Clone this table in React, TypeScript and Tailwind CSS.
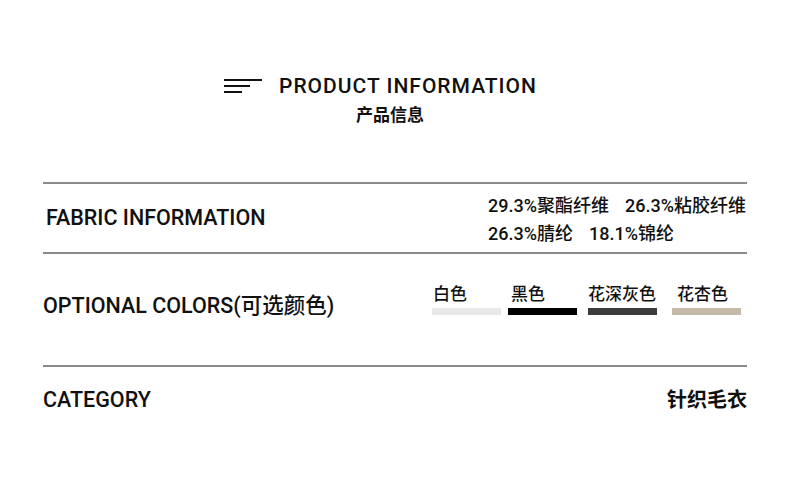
const font = { fontFamily: 'Roboto, "Noto Sans CJK SC", sans-serif' };

const colors = [
  { name: '白色', bar: 'bg-[#e8e8e8]', gap: 'mr-[7px]', pad: 'pl-[1px]' },
  { name: '黑色', bar: 'bg-[#000000]', gap: 'mr-[11px]', pad: 'pl-[3px]' },
  { name: '花深灰色', bar: 'bg-[#3b3b3d]', gap: 'mr-[15px]', pad: 'pl-0' },
  { name: '花杏色', bar: 'bg-[#c5b9a7]', gap: 'mr-0', pad: 'pl-[5px]' },
];

export default function App() {
  return (
    <main className="h-[494px] w-[790px] bg-white text-[#111]" style={font}>
      <header className="pt-[72px]">
        <div className="flex items-center pl-[224px]">
          <div className="flex w-[38px] flex-col gap-[4px]">
            <span className="h-[2px] w-[38px] bg-[#111]" />
            <span className="h-[2px] w-[26px] bg-[#111]" />
            <span className="h-[2px] w-[18px] bg-[#111]" />
          </div>
          <h1 className="ml-[17px] text-[21px] leading-[28px] font-medium tracking-[1px]">PRODUCT INFORMATION</h1>
        </div>
        <p className="mt-[3px] pl-[356px] text-[17px] leading-[24px] font-bold">产品信息</p>
      </header>

      <section className="mx-[43px] mt-[55px] border-t-2 border-[#8a8a8a]">
        <div className="flex h-[68px] items-center justify-between">
          <h2 className="pl-[3px] text-[21.5px] font-medium">FABRIC INFORMATION</h2>
          <div className="w-[259px] pt-[3px] text-[18px] leading-[28px] font-medium whitespace-nowrap">
            <p className="flex gap-[16px]">
              <span>29.3%聚酯纤维</span>
              <span>26.3%粘胶纤维</span>
            </p>
            <p className="flex gap-[16px]">
              <span>26.3%腈纶</span>
              <span>18.1%锦纶</span>
            </p>
          </div>
        </div>
      </section>

      <section className="mx-[43px] border-t-2 border-[#8a8a8a]">
        <div className="flex h-[111px] items-start justify-between pt-[29px]">
          <h2 className="mt-[7px] text-[21.5px] font-medium">OPTIONAL COLORS(可选颜色)</h2>
          <div className="mr-[6px] flex">
            {colors.map((c) => (
              <div key={c.name} className={`flex w-[69px] flex-col ${c.gap}`}>
                <span className={`text-[17px] leading-[22px] font-medium whitespace-nowrap ${c.pad}`}>{c.name}</span>
                <span className={`mt-[3px] h-[7px] w-[69px] ${c.bar}`} />
              </div>
            ))}
          </div>
        </div>
      </section>

      <section className="mx-[43px] border-t-2 border-[#8a8a8a]">
        <div className="flex h-[66px] items-center justify-between">
          <h2 className="text-[21.5px] font-medium">CATEGORY</h2>
          <span className="text-[20px] font-bold">针织毛衣</span>
        </div>
      </section>
    </main>
  );
}
